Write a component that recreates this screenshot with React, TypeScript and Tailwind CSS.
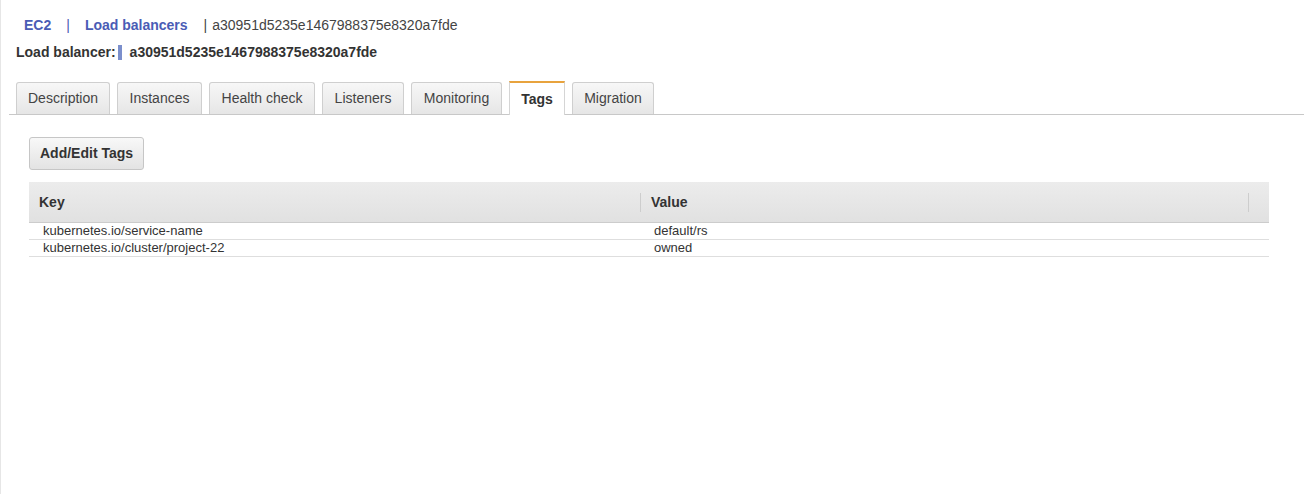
const tabs = [
  { label: "Description", w: "w-[94px]" },
  { label: "Instances", w: "w-[85px]" },
  { label: "Health check", w: "w-[106px]" },
  { label: "Listeners", w: "w-[82px]" },
  { label: "Monitoring", w: "w-[91px]" },
  { label: "Tags", w: "w-[56px]" },
  { label: "Migration", w: "w-[82px]" },
];

const tags = [
  { key: "kubernetes.io/service-name", value: "default/rs" },
  { key: "kubernetes.io/cluster/project-22", value: "owned" },
];

const Tab = ({ label, w, active }: { label: string; w: string; active?: boolean }) =>
  active ? (
    <div className={`${w} relative -mb-px flex h-[34px] items-center justify-center border-x border-t-2 border-[#d5d5d5] border-t-[#e8a33d] bg-white text-[14px] font-bold text-[#333]`}>
      {label}
    </div>
  ) : (
    <div className={`${w} flex h-[32px] items-center justify-center rounded-t-[3px] border border-b-0 border-[#cfcfcf] bg-gradient-to-b from-[#f7f7f7] to-[#e6e6e6] text-[14px] text-[#444]`}>
      {label}
    </div>
  );

export default function App() {
  return (
    <div className="h-[494px] w-[1304px] border-l border-[#e6e6e6] bg-white font-['Liberation_Sans',Arial,sans-serif] text-[#444]">
      <div className="flex items-center pl-[23px] pt-[16px] text-[14px] leading-[18px]">
        <span className="font-bold text-[#4a5cb5]">EC2</span>
        <span className="ml-[15px] text-[#4a5cb5]">|</span>
        <span className="ml-[15px] font-bold text-[#4a5cb5]">Load balancers</span>
        <span className="ml-[16px] text-[#444]">|</span>
        <span className="ml-[5px] text-[#444]">a30951d5235e1467988375e8320a7fde</span>
      </div>
      <div className="mt-[9px] flex items-center pl-[15px] text-[14px] font-bold leading-[18px] text-[#333]">
        <span>Load balancer:</span>
        <span className="ml-[2px] h-[15px] w-[4px] bg-[#7b8fcc]" />
        <span className="ml-[8px]">a30951d5235e1467988375e8320a7fde</span>
      </div>
      <div className="ml-[8px] mt-[20px] flex items-end gap-[7px] border-b border-[#c8c8c8] pl-[7px]">
        {tabs.map((t) => (
          <Tab key={t.label} label={t.label} w={t.w} active={t.label === "Tags"} />
        ))}
      </div>
      <div className="px-[28px] pt-[22px]">
        <button className="flex h-[33px] items-center rounded-[3px] border border-[#c6c6c6] bg-gradient-to-b from-[#f8f8f8] to-[#e3e3e3] px-[10px] text-[14px] font-bold text-[#333]">
          Add/Edit Tags
        </button>
        <div className="mt-[12px] w-[1240px]">
          <div className="flex h-[41px] items-center border-b border-[#cccccc] bg-gradient-to-b from-[#ececec] to-[#e1e1e1] text-[14px] font-bold text-[#333]">
            <div className="flex h-full w-[611px] items-center pl-[10px]">Key</div>
            <div className="h-[19px] w-px bg-[#cdcdcd]" />
            <div className="flex h-full w-[607px] items-center pl-[10px]">Value</div>
            <div className="h-[19px] w-px bg-[#cdcdcd]" />
          </div>
          {tags.map((r) => (
            <div key={r.key} className="flex h-[17px] items-center border-b border-[#dedede] text-[13px] leading-[14px] text-[#333]">
              <div className="w-[612px] pl-[14px]">{r.key}</div>
              <div className="pl-[13px]">{r.value}</div>
            </div>
          ))}
        </div>
      </div>
    </div>
  );
}
